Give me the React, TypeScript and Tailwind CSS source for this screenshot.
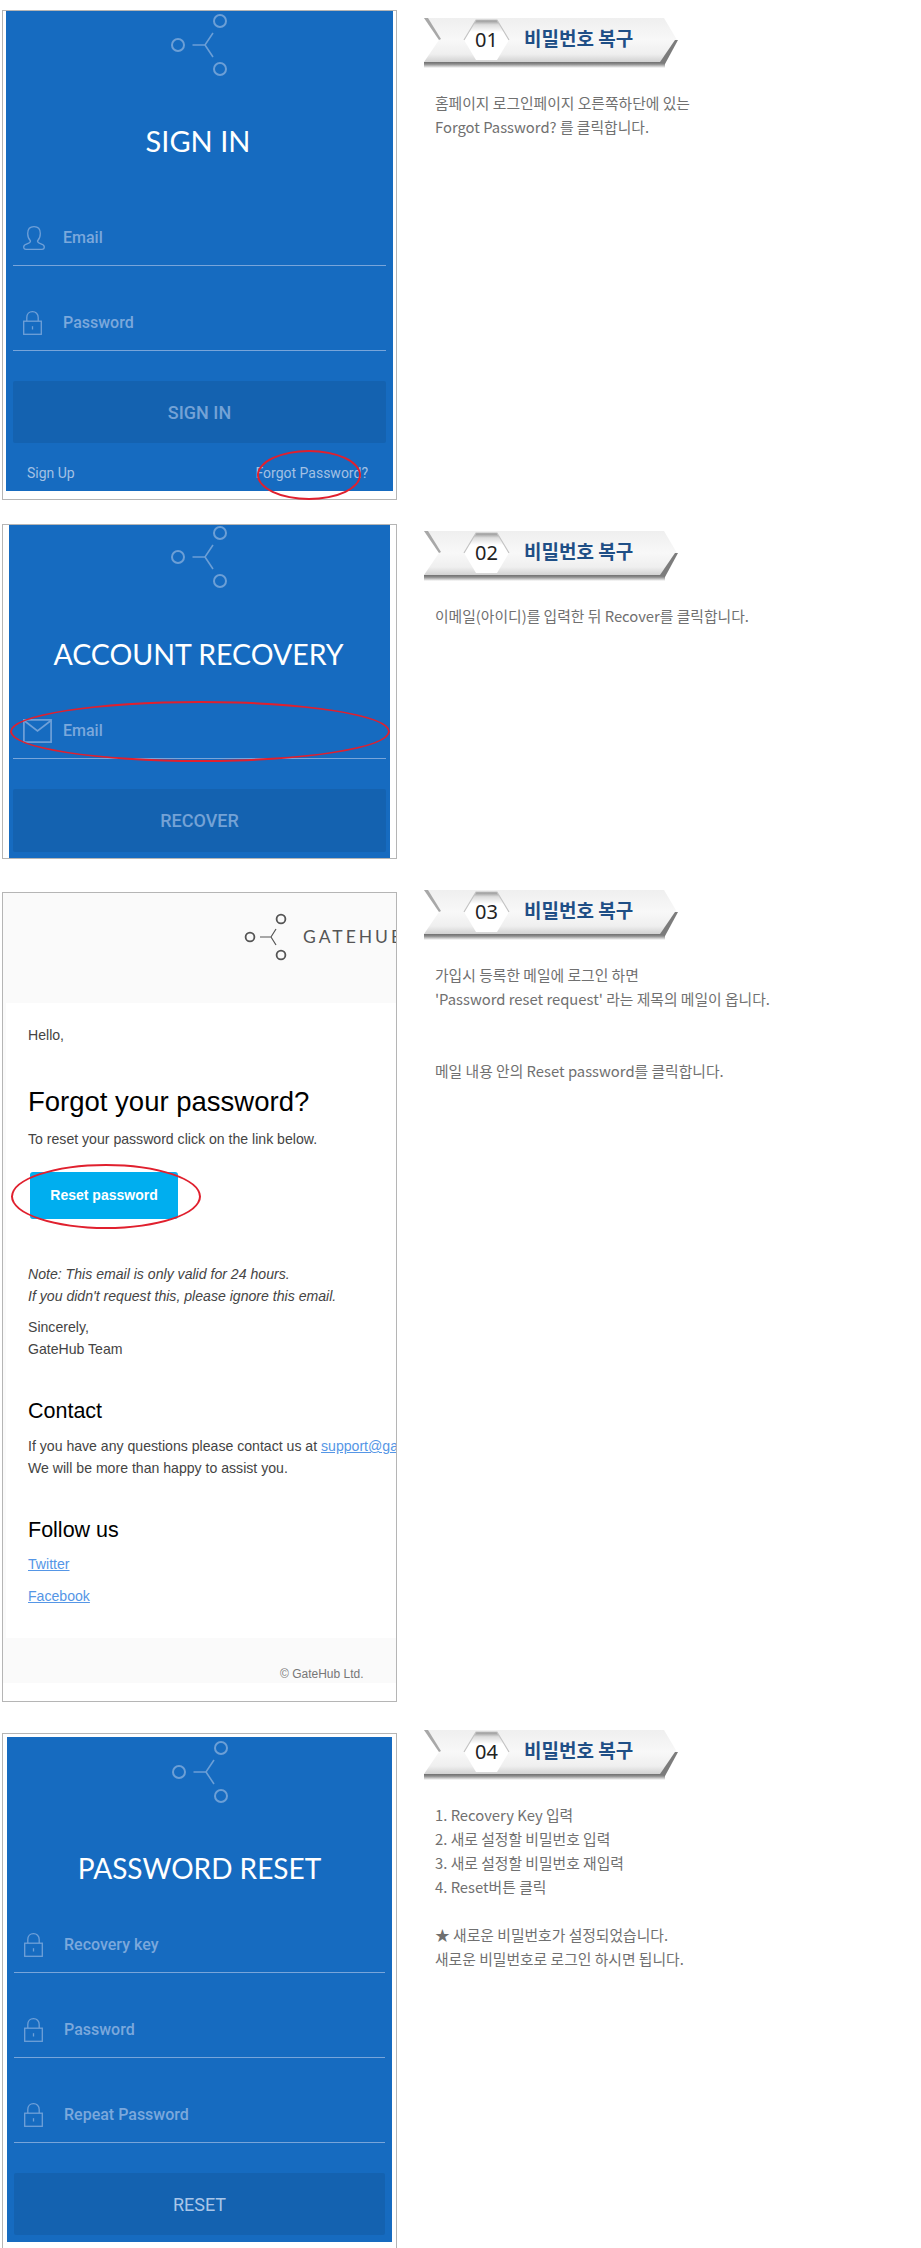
import React from "react";

const cjk = "font-['Noto_Sans_CJK_KR',sans-serif]";

function Logo() {
  return (
    <svg width="56" height="62" viewBox="0 0 56 62" fill="none" stroke="#6c9fd6" strokeWidth="1.6">
      <circle cx="7" cy="31" r="6" strokeWidth="2" />
      <circle cx="49" cy="7" r="6" strokeWidth="2" />
      <circle cx="49" cy="55" r="6" strokeWidth="2" />
      <path d="M21.5 31H34L42 19M34 31L42 43" />
    </svg>
  );
}

function UserIcon() {
  return (
    <svg width="22" height="24" viewBox="0 0 22 24" fill="none" stroke="#6fa0d8" strokeWidth="1.3">
      <path d="M7.5 15C5.5 13 4.7 10 4.7 7.5C4.7 3 7.5 .7 11 .7C14.5 .7 17.3 3 17.3 7.5C17.3 10 16.5 13 14.5 15C14.5 16.5 15.5 17 18 17.8C20.5 18.6 21.3 19.5 21.3 21C21.3 22.5 20.5 23.3 19 23.3H3C1.5 23.3 .7 22.5 .7 21C.7 19.5 1.5 18.6 4 17.8C6.5 17 7.5 16.5 7.5 15Z" />
    </svg>
  );
}

function LockIcon() {
  return (
    <svg width="19" height="24" viewBox="0 0 19 24" fill="none" stroke="#6fa0d8" strokeWidth="1.3">
      <rect x=".7" y="10.2" width="17.6" height="13.1" />
      <path d="M3.8 10V6.6C3.8 3 6.2 .7 9.5 .7C12.8 .7 15.2 3 15.2 6.6V10" />
      <path d="M9.5 15.2V18.5" />
    </svg>
  );
}

function MailIcon() {
  return (
    <svg width="29" height="24" viewBox="0 0 29 24" fill="none" stroke="#6fa0d8" strokeWidth="1.7">
      <rect x=".9" y=".9" width="27.2" height="22.2" />
      <path d="M1 1.5L14.5 12L28 1.5" />
    </svg>
  );
}

function Field({ icon, label }: { icon: React.ReactNode; label: string }) {
  return (
    <div className="h-[85px] border-b border-[#78a5da] flex items-end pb-[13px] pl-[10px]">
      <div className="w-[40px] h-[28px] flex items-center">{icon}</div>
      <div className="h-[28px] leading-[28px] text-[16px] font-medium font-['Roboto',sans-serif] text-[#7ba8dc]">{label}</div>
    </div>
  );
}

function Title({ children, className }: { children: string; className: string }) {
  return (
    <div className={`h-[40px] leading-[40px] text-center text-white font-['Lato',sans-serif] whitespace-nowrap ${className}`}>
      {children}
    </div>
  );
}

function SubmitButton({ children, light, tall }: { children: string; light?: boolean; tall?: boolean }) {
  return (
    <div
      className={`mt-[30px] ${tall ? "h-[63px]" : "h-[62px]"} rounded-[2px] bg-[#1462b0] flex items-center justify-center text-[18px] font-['Roboto',sans-serif] ${
        light ? "text-[#a9c6e8]" : "font-medium text-[#74a2d6]"
      }`}
    >
      {children}
    </div>
  );
}

function Ring({ className }: { className: string }) {
  return <div className={`absolute rounded-[50%] border-2 border-[#e0202e] ${className}`} />;
}

function Banner({ num, id }: { num: string; id: string }) {
  return (
    <div className="relative w-[254px] h-[50px] flex">
      <svg width="254" height="50" viewBox="0 0 254 50" className="absolute inset-0">
        <defs>
          <linearGradient id={`b${id}`} x1="0" y1="0" x2="0" y2="1">
            <stop offset="0" stopColor="#efefef" />
            <stop offset="0.5" stopColor="#f8f8f8" />
            <stop offset="0.82" stopColor="#efefef" />
            <stop offset="1" stopColor="#d2d2d2" />
          </linearGradient>
          <linearGradient id={`s${id}`} x1="0" y1="0" x2="0" y2="1">
            <stop offset="0" stopColor="#707070" />
            <stop offset="0.35" stopColor="#8c8c8c" />
            <stop offset="1" stopColor="#ffffff" />
          </linearGradient>
          <linearGradient id={`h${id}`} x1="0" y1="0" x2="0" y2="1">
            <stop offset="0" stopColor="#8f8f8f" />
            <stop offset="0.12" stopColor="#dddddd" />
            <stop offset="0.3" stopColor="#ffffff" />
            <stop offset="1" stopColor="#ffffff" />
          </linearGradient>
        </defs>
        <polygon points="0,0 240,0 253,22 241,44 0,44 15,22" fill={`url(#b${id})`} />
        <rect x="0" y="44" width="241" height="6" fill={`url(#s${id})`} />
        <polygon points="0,0 4,0 17,21 15,22" fill="#a8a8a8" />
        <polygon points="254,22 241,46 236,44 251,22" fill="#7c7c7c" />
        <polygon points="52,2 73,2 85,22 73,42 52,42 40,22" fill={`url(#h${id})`} />
        <path d="M40 22L52 2H73L85 22" fill="none" stroke="#c4c4c4" strokeWidth="1.2" />
      </svg>
      <div className="relative ml-[40px] w-[45px] h-[44px] flex items-center justify-center text-[20px] font-['Noto_Sans',sans-serif] text-[#222222]">
        {num}
      </div>
      <div className={`relative ml-[15px] h-[40px] leading-[40px] text-[19px] font-bold text-[#1f4f86] whitespace-nowrap ${cjk}`}>
        비밀번호 복구
      </div>
    </div>
  );
}

function Steps({ num, lines, className }: { num: string; lines: string[]; className: string }) {
  return (
    <div className={`flex-1 ${className}`}>
      <Banner num={num} id={num} />
      <div className={`mt-[23px] pl-[11px] text-[14.8px] text-[#707070] ${cjk}`}>
        {lines.map((l, i) => (
          <div key={i} className="h-[24px] leading-[24px] whitespace-nowrap">
            {l}
          </div>
        ))}
      </div>
    </div>
  );
}

function Row({ children, className }: { children: React.ReactNode; className: string }) {
  return <div className={`flex ${className}`}>{children}</div>;
}

function Left({ children }: { children: React.ReactNode }) {
  return <div className="w-[424px] pl-[2px] shrink-0">{children}</div>;
}

const tx = "h-[22px] leading-[22px] text-[14.1px] text-[#444444] whitespace-nowrap";
const hd = "leading-[30px] h-[30px] text-[21.5px] text-black";
const lk = "text-[#5596e6] underline";

function MailCard() {
  return (
    <div className="relative w-[395px] border border-[#b5b5b5] overflow-hidden bg-white font-['Liberation_Sans',sans-serif]">
      <div className="bg-[#fafafa]">
        <div className="h-[110px] flex items-start pt-[19px] pl-[241px]">
          <svg width="44" height="50" viewBox="0 0 44 50" fill="none" stroke="#555555" strokeWidth="1.2" className="shrink-0">
            <circle cx="6" cy="25" r="4.4" strokeWidth="1.8" />
            <circle cx="37" cy="7" r="4.4" strokeWidth="1.8" />
            <circle cx="37" cy="43" r="4.4" strokeWidth="1.8" />
            <path d="M16 25H27L32 17M27 25L32 33" />
          </svg>
          <div className="ml-[15px] h-[50px] leading-[50px] text-[17.5px] tracking-[3px] text-[#555555] font-['Lato',sans-serif] whitespace-nowrap">GATEHUB</div>
        </div>
        <div className="ml-[3px] bg-white pl-[22px] pt-[21px] pb-[31px]">
          <div className={tx}>Hello,</div>
          <div className="mt-[36px] h-[40px] leading-[40px] text-[27.5px] text-black">Forgot your password?</div>
          <div className={`mt-[6px] ${tx}`}>To reset your password click on the link below.</div>
          <div className="mt-[22px] ml-[2px] w-[148px] h-[47px] rounded-[3px] bg-[#00aeef] flex items-center justify-center text-[14px] font-bold text-white">
            Reset password
          </div>
          <div className={`mt-[44px] italic ${tx}`}>Note: This email is only valid for 24 hours.</div>
          <div className={`italic ${tx}`}>If you didn't request this, please ignore this email.</div>
          <div className={`mt-[9px] ${tx}`}>Sincerely,</div>
          <div className={tx}>GateHub Team</div>
          <div className={`mt-[36px] ${hd}`}>Contact</div>
          <div className={`mt-[9px] ${tx}`}>
            If you have any questions please contact us at <span className={lk}>support@gatehub.net</span>
          </div>
          <div className={tx}>We will be more than happy to assist you.</div>
          <div className={`mt-[36px] ${hd}`}>Follow us</div>
          <div className={`mt-[8px] ${tx}`}>
            <span className={lk}>Twitter</span>
          </div>
          <div className={`mt-[10px] ${tx}`}>
            <span className={lk}>Facebook</span>
          </div>
        </div>
        <div className="h-[45px] flex items-end pl-[277px] text-[12px] leading-[18px] text-[#777777] whitespace-nowrap">
          © GateHub Ltd.
        </div>
      </div>
      <div className="h-[18px]" />
      <Ring className="left-[8px] top-[271px] w-[190px] h-[65px]" />
    </div>
  );
}

export default function App() {
  return (
    <div className="w-[921px] h-[2248px] overflow-hidden bg-white pt-[10px]">
      <Row className="">
        <Left>
          <div className="relative w-[395px] border border-[#b5b5b5] px-[3px] pb-[8px] bg-white">
            <div className="bg-[#166bc0] px-[7px] pb-[8px]">
              <div className="h-[65px] flex justify-center pt-[3px] pr-[2px]">
                <Logo />
              </div>
              <Title className="mt-[45px] pr-[3px] text-[29px]">SIGN IN</Title>
              <div className="mt-[20px]">
                <Field icon={<UserIcon />} label="Email" />
                <Field icon={<LockIcon />} label="Password" />
              </div>
              <SubmitButton>SIGN IN</SubmitButton>
              <div className="mt-[20px] h-[20px] leading-[20px] flex justify-between pl-[14px] pr-[18px] text-[14px] font-['Roboto',sans-serif] text-[#a3c1e4]">
                <span>Sign Up</span>
                <span>Forgot Password?</span>
              </div>
            </div>
            <Ring className="left-[254px] top-[439px] w-[104px] h-[50px]" />
          </div>
        </Left>
        <Steps
          num="01"
          className="pt-[8px]"
          lines={["홈페이지 로그인페이지 오른쪽하단에 있는", "Forgot Password? 를 클릭합니다."]}
        />
      </Row>

      <Row className="mt-[24px]">
        <Left>
          <div className="relative w-[395px] border border-[#b5b5b5] px-[6px] bg-white">
            <div className="bg-[#166bc0] px-[4px] pb-[6px]">
              <div className="h-[64px] flex justify-center pt-[1px] pr-[2px]">
                <Logo />
              </div>
              <Title className="mt-[45px] pr-[2px] text-[28.5px]">ACCOUNT RECOVERY</Title>
              <Field icon={<MailIcon />} label="Email" />
              <SubmitButton tall>RECOVER</SubmitButton>
            </div>
            <Ring className="left-[7px] top-[176px] w-[380px] h-[61px]" />
          </div>
        </Left>
        <Steps num="02" className="pt-[7px]" lines={["이메일(아이디)를 입력한 뒤 Recover를 클릭합니다."]} />
      </Row>

      <Row className="mt-[33px]">
        <Left>
          <MailCard />
        </Left>
        <Steps
          num="03"
          className="-mt-[2px]"
          lines={["가입시 등록한 메일에 로그인 하면", "'Password reset request' 라는 제목의 메일이 옵니다.", "", "", "메일 내용 안의 Reset password를 클릭합니다."]}
        />
      </Row>

      <Row className="mt-[31px]">
        <Left>
          <div className="w-[395px] h-[515px] border border-b-0 border-[#b5b5b5] pt-[3px] px-[4px] bg-white">
            <div className="bg-[#166bc0] px-[7px] pb-[7px]">
              <div className="h-[66px] flex justify-center pt-[4px]">
                <Logo />
              </div>
              <Title className="mt-[45px] text-[28px]">PASSWORD RESET</Title>
              <Field icon={<LockIcon />} label="Recovery key" />
              <Field icon={<LockIcon />} label="Password" />
              <Field icon={<LockIcon />} label="Repeat Password" />
              <SubmitButton light>RESET</SubmitButton>
            </div>
          </div>
        </Left>
        <Steps
          num="04"
          className="-mt-[3px]"
          lines={[
            "1. Recovery Key 입력",
            "2. 새로 설정할 비밀번호 입력",
            "3. 새로 설정할 비밀번호 재입력",
            "4. Reset버튼 클릭",
            "",
            "★ 새로운 비밀번호가 설정되었습니다.",
            "새로운 비밀번호로 로그인 하시면 됩니다.",
          ]}
        />
      </Row>
    </div>
  );
}
